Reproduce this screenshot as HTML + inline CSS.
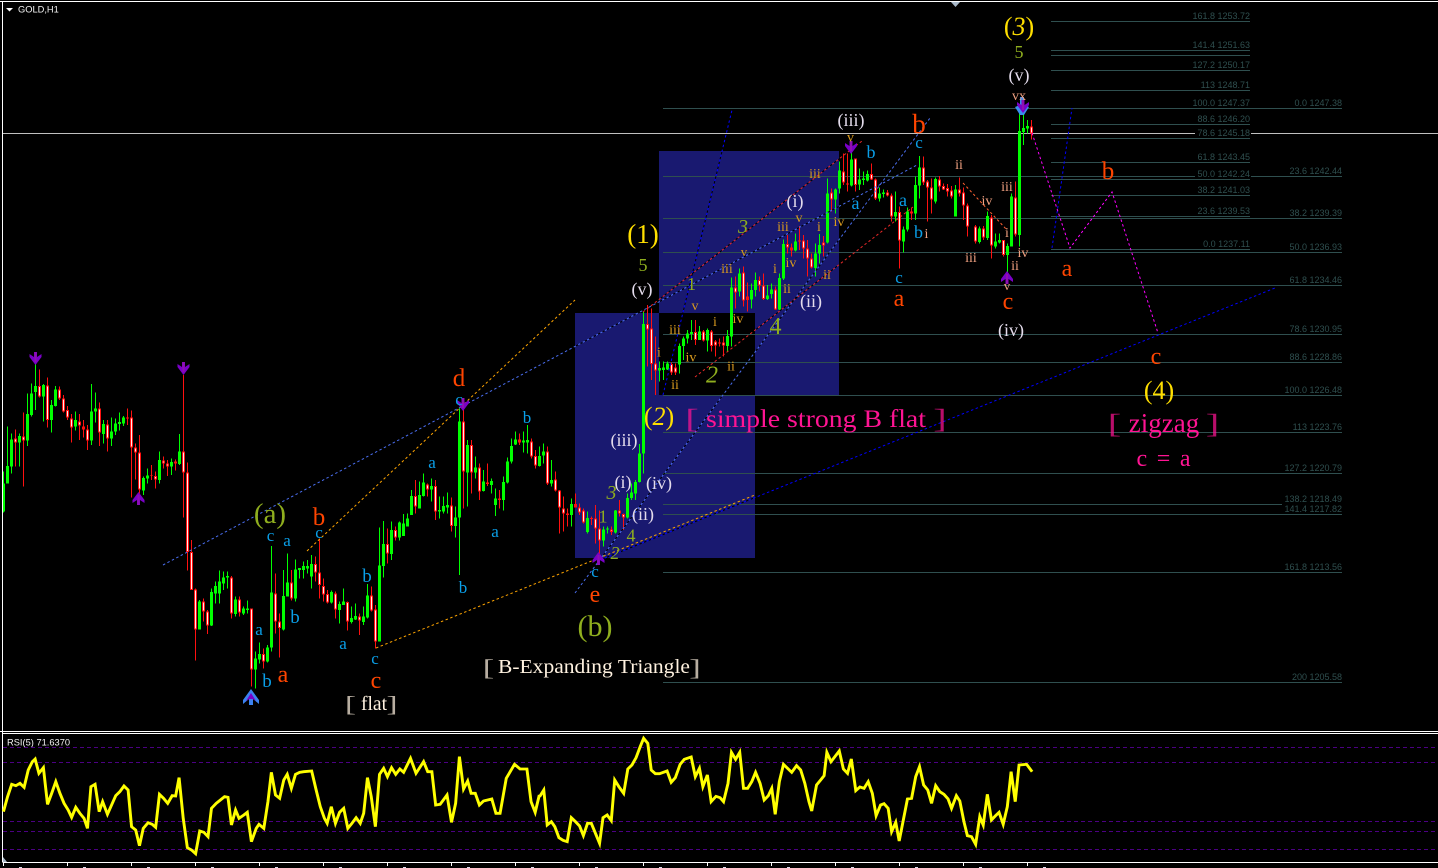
<!DOCTYPE html>
<html lang="en">
<head>
<meta charset="utf-8">
<title>GOLD,H1</title>
<style>
html,body{margin:0;padding:0;background:#000;width:1438px;height:868px;overflow:hidden}
svg{display:block}
text{font-family:"Liberation Serif","DejaVu Serif",serif;text-anchor:middle}
.f{font-family:"Liberation Sans","DejaVu Sans",sans-serif;font-size:9px;fill:#2f4f4f;text-anchor:end}
.u{font-family:"Liberation Sans","DejaVu Sans",sans-serif;font-size:9.3px;fill:#f4f4f4;text-anchor:start}
.bl{fill:#0a9fe8}.or{fill:#ff4500}.ol{fill:#8fae1e}.ye{fill:#ffdf00}.go{fill:#d99a1e}.sa{fill:#f0a080}
.wh{fill:#e4dcec}.pk{fill:#ff1493}.cr{fill:#fff2e0}
.s12{font-size:13px}.s14{font-size:14px}.s17{font-size:17px}.s18{font-size:18px}.s19{font-size:19px}.s24{font-size:24px}.s26{font-size:26px}
.it{font-style:italic}
.br{opacity:.72}
.cw{fill:none;shape-rendering:crispEdges}
.tl{fill:none;stroke-width:1;stroke-dasharray:2.5 2.5}
</style>
</head>
<body>
<svg width="1438" height="868" viewBox="0 0 1438 868" xmlns="http://www.w3.org/2000/svg">
<defs>
<clipPath id="rc"><path d="M575 313H659V395H755V558H575ZM659 151H839V395H755V313H659Z"/></clipPath>
<g id="ad"><path d="M-1.5-7H1.5V-2L6-5V-2L0 6L-6-2V-5L-1.5-2Z" fill="#7a00c8"/><path d="M-1-7H1V3H-1Z" fill="#9010b0"/></g>
<g id="au"><path d="M-1.5 7H1.5V2L6 5V2L0-6L-6 2V5L-1.5 2Z" fill="#7a00c8"/><path d="M-1 7H1V-3H-1Z" fill="#9010b0"/></g>
</defs>
<rect width="1438" height="868" fill="#000"/>

<!-- blue boxes -->
<path d="M575 313H659V395H755V558H575Z" fill="#191970"/>
<path d="M659 151H839V395H755V313H659Z" fill="#191970"/>

<!-- fibonacci lines -->
<path fill="none" stroke="#2f4f4f" shape-rendering="crispEdges" d="M1051 21.5H1250M1051 50.5H1250M1051 55.5H1250M1051 70.5H1250M1051 90.5H1250M1051 124.5H1250M1051 138.5H1250M1051 162.5H1250M1051 179.5H1250M1051 195.5H1250M1051 216.5H1250M1051 249.5H1250M663 108.5H1342M663 176.5H1342M663 218.5H1342M663 252.5H1342M663 285.5H1342M663 334.5H1342M663 362.5H1342M663 395.5H1342M663 432.5H1342M663 473.5H1342M663 504.5H1282M663 514.5H1342M663 572.5H1342M663 682.5H1342"/>
<path stroke="#c0c0c0" shape-rendering="crispEdges" d="M3 133.5H1438"/>

<!-- candles, first segment -->
<g transform="translate(.17 340) scale(.33333)" class="cw">
<path stroke="#00ff00" stroke-width="3" d="M10 395V518M22 260V402M34 280V400M58 280V380M82 160V318M94 130V230M106 60V210M130 132V244M154 180V278M166 138V200M226 215V272M274 132V315M286 158V248M310 240V310M334 232V318M346 235V285M358 218V272M370 228V258M430 410V465M442 385V430M478 334V430M514 355V405M538 282V375M598 780V868M634 745V858M646 725V790M658 692V790M670 695V750M682 695V745M706 770V830M730 800V825M742 782V820M766 935V1045M778 908V970M802 915V968M814 618V935M850 690V872M862 640V770M886 658V785M898 685V715M910 665V715M922 660V700M934 645V745M994 752V790M1018 785V850M1030 745V795M1054 800V850M1066 790V840M1090 800V855M1102 732V835M1138 563V905M1150 543V712M1174 545V660M1198 545V602"/>
<path stroke="#00ff00" stroke-width="9" d="M10 430V515M22 378V430M34 298V380M58 288V308M82 222V302M94 160V225M106 138V156M130 135V170M154 195V240M166 148V198M226 240V260M274 214V302M286 205V215M310 252V282M334 274V296M346 250V275M358 246V252M370 232V250M430 414V452M442 406V416M478 360V420M514 366V380M538 334V372M598 784V868M634 756V856M646 738V760M658 724V760M670 712V730M682 708V712M706 778V822M730 806V820M742 805V810M766 955V988M778 942V958M802 922V964M814 757V922M850 768V868M862 727V770M886 688V776M898 684V690M910 678V690M922 678V685M934 672V710M994 756V788M1018 792V810M1030 785V795M1054 834V846M1066 828V838M1090 830V846M1102 766V832M1138 676V904M1150 612V678M1174 570V642M1198 548V592"/>
<path stroke="#ff1010" stroke-width="3" d="M46 268V380M70 217V440M118 88V172M142 112V262M178 140V180M190 165V218M202 198V240M214 222V308M238 222V300M250 240V292M262 255V330M298 188V318M322 240V335M382 205V255M394 212V472M406 310V418M418 285V460M454 375V420M466 395V445M490 350V385M502 360V408M526 358V392M550 105V532M562 368V692M574 600V680M586 745V962M610 775V845M622 810V882M694 708V835M718 770V830M754 805V1040M790 925V985M826 700V880M838 820V952M874 690V782M946 650V725M958 595V775M970 715V785M982 750V790M1006 755V835M1042 785V872M1078 820V885M1114 740V815M1126 795V925M1162 565V670M1186 560V602"/>
<path stroke="#ff1010" stroke-width="9" d="M46 295V308M70 290V302M118 138V170M142 136V240M178 148V175M190 175V214M202 210V232M214 236V262M238 244V256M250 260V268M262 268V302M298 205V278M322 254V296M382 232V236M394 232V322M406 322V338M418 337V448M454 405V407M466 408V418M490 362V370M502 370V380M526 364V370M550 334V398M562 397V636M574 636V750M586 748V868M610 784V814M622 814V856M694 712V820M718 778V818M754 805V988M790 942V964M826 760V845M838 845V864M874 727V776M946 672V698M958 698V735M970 738V764M982 762V788M1006 760V808M1042 786V844M1078 830V842M1114 766V812M1126 808V904M1162 612V640M1186 570V592"/>
<path stroke="#ffecec" stroke-width="3" d="M46 298V305M70 293V299M118 141V167M142 139V237M178 151V172M190 178V211M202 213V229M214 239V259M238 247V253M262 271V299M298 208V275M322 257V293M394 235V319M406 325V335M418 340V445M466 411V415M490 365V367M502 373V377M550 337V395M562 400V633M574 639V747M586 751V865M610 787V811M622 817V853M694 715V817M718 781V815M754 808V985M790 945V961M826 763V842M838 848V861M874 730V773M946 675V695M958 701V732M970 741V761M982 765V785M1006 763V805M1042 789V841M1078 833V839M1114 769V809M1126 811V901M1162 615V637M1186 573V589"/>
</g>

<!-- candles, second segment -->
<g transform="translate(380.17 300) scale(.33333)" class="cw">
<path stroke="#00ff00" stroke-width="3" d="M70 642V708M82 640V680M94 570V645M118 545V625M130 520V590M154 535V605M178 590V655M190 590V640M202 578V640M226 620V712M238 325V825M262 420V620M286 470V535M310 510V575M334 535V580M346 565V648M370 530V632M382 472V550M394 415V490M406 395V435M430 395V458M442 375V460M478 440V500M490 430V490M514 480V560M574 595V680M622 635V700M670 680V740M682 680V700M706 630V700M742 580V655M754 550V600M766 540V600M778 432V548M790 35V520M838 185V245M850 185V240M862 185V210M898 130V220M910 110V180M922 90V130M934 60V120M958 78V120M982 85V155M1042 90V155"/>
<path stroke="#00ff00" stroke-width="9" d="M70 670V708M82 655V680M94 588V645M118 585V625M130 548V588M154 558V568M178 630V635M190 618V635M202 615V622M226 652V678M238 365V652M262 435V518M286 502V518M310 545V573M334 543V555M346 595V615M370 546V600M382 484V548M394 438V484M406 418V434M430 422V428M442 420V428M478 468V498M490 454V466M514 540V550M574 612V645M622 654V696M670 688V722M682 686V689M706 632V698M742 594V652M754 578V594M766 546V580M778 460V546M790 72V460M838 204V212M850 202V210M862 190V208M898 138V194M910 116V138M922 100V116M934 96V102M958 94V120M982 90V122M1042 108V138"/>
<path stroke="#ff1010" stroke-width="3" d="M106 540V640M142 550V590M166 540V660M214 592V695M250 310V625M274 420V580M298 490V600M322 490V558M358 570V625M418 400V435M454 415V475M466 450V505M502 440V555M526 515V575M538 570V700M550 590V695M562 625V680M586 580V622M598 610V645M610 625V670M634 650V675M646 615V730M658 632V770M694 680V705M718 600V650M730 640V690M802 15V200M814 25V240M826 110V285M874 188V225M886 190V225M946 60V135M970 90V125M994 90V155M1006 120V170M1018 115V140M1030 110V170"/>
<path stroke="#ff1010" stroke-width="9" d="M106 588V620M142 553V568M166 558V635M214 616V678M250 364V515M274 435V518M298 502V575M322 548V552M358 595V600M418 418V428M454 424V470M466 468V496M502 454V550M526 538V572M538 572V622M550 625V640M562 640V645M586 612V622M598 622V638M610 632V668M634 654V657M646 655V685M658 686V722M694 688V696M718 632V640M730 642V652M802 72V88M814 85V192M826 190V212M874 192V218M886 202V218M946 96V120M970 94V122M994 94V138M1006 125V137M1018 127V130M1030 128V137"/>
<path stroke="#ffecec" stroke-width="3" d="M106 591V617M142 556V565M166 561V632M214 619V675M250 367V512M274 438V515M298 505V572M454 427V467M466 471V493M502 457V547M526 541V569M538 575V619M550 628V637M598 625V635M610 635V665M646 658V682M658 689V719M694 691V693M718 635V637M730 645V649M802 75V85M814 88V189M826 193V209M874 195V215M886 205V215M946 99V117M970 97V119M994 97V135M1006 128V134M1030 131V134"/>
</g>

<!-- candles, third segment -->
<g transform="translate(640.17 100) scale(.33333)" class="cw">
<path stroke="#00ff00" stroke-width="3" d="M274 532V740M298 505V590M334 550V625M346 518V590M382 555V600M394 550V595M418 520V630M430 418V540M466 400V455M526 430V530M538 402V490M562 235V430M586 265V340M598 185V280M634 135V260M658 205V270M670 215V255M682 212V245M718 262V305M730 268V292M766 275V365M790 380V458M802 322V395M826 230V360M838 168V295M886 232V310M946 255V350M1018 380V430M1042 335V420M1066 400V445M1078 400V430M1102 430V520M1114 280V440M1138 30V440M1150 40V135M1162 60V100"/>
<path stroke="#00ff00" stroke-width="9" d="M274 562V710M298 520V575M334 570V598M346 540V570M382 586V597M394 568V582M418 534V628M430 432V536M466 424V452M526 460V504M538 435V460M562 280V428M586 268V298M598 212V266M634 178V256M658 238V254M670 236V240M682 222V242M718 280V296M730 278V282M766 336V350M790 388V424M802 334V388M826 255V340M838 202V256M886 237V304M946 268V350M1018 385V426M1042 348V414M1066 424V440M1078 420V428M1102 438V465M1114 290V440M1138 93V405M1150 84V96M1162 78V86"/>
<path stroke="#ff1010" stroke-width="3" d="M286 530V625M310 500V620M322 548V635M358 530V575M370 520V600M406 560V630M442 405V460M454 430V470M478 378V450M490 405V475M502 420V530M514 460V505M550 408V470M574 265V335M610 160V255M622 160V275M646 175V275M694 190V240M706 235V300M742 270V290M754 280V365M778 320V505M814 322V360M850 170V255M862 240V365M874 235V340M898 228V275M910 250V270M922 252V290M934 258V295M958 232V290M970 262V360M982 310V410M1006 375V430M1030 378V420M1054 345V475M1090 420V470M1126 245V410M1174 60V118"/>
<path stroke="#ff1010" stroke-width="9" d="M286 562V578M310 517V602M322 590V600M358 540V556M370 556V597M406 568V628M442 432V442M454 442V452M478 422V424M490 422V446M502 446V476M514 475V502M550 428V436M574 278V298M610 214V248M622 250V254M646 176V255M694 222V238M706 238V296M742 278V286M754 286V350M778 336V422M814 334V340M850 202V248M862 244V262M874 262V298M898 238V260M910 258V268M922 264V274M934 272V290M958 268V280M970 278V316M982 316V380M1006 380V424M1030 385V412M1054 352V436M1090 420V465M1126 292V404M1174 80V100"/>
<path stroke="#ffecec" stroke-width="3" d="M286 565V575M310 520V599M358 543V553M370 559V594M406 571V625M442 435V439M490 425V443M502 449V473M514 478V499M550 431V433M574 281V295M610 217V245M646 179V252M694 225V235M706 241V293M742 281V283M754 289V347M778 339V419M850 205V245M862 247V259M874 265V295M898 241V257M910 261V265M922 267V271M934 275V287M958 271V277M970 281V313M982 319V377M1006 383V421M1030 388V409M1054 355V433M1090 423V462M1126 295V401M1174 83V97"/>
</g>

<!-- trend lines -->
<g class="tl">
<path stroke="#4a6ef0" d="M163 565L917 165M575 593L930 118"/>
<path stroke="#ffa500" d="M307 551L575 300M376 648L755 495"/>
<path stroke="#0000ff" d="M600 560L1275 288M663 395L732 110M1052 248L1072 108"/>
<path stroke="#e82828" d="M643 312L862 141M695 377L913 207"/>
<path stroke="#ff6030" d="M963 183L1007 230"/>
<path stroke="#ff00ff" d="M1032 133L1070 248L1112 192L1158 333"/>
</g>
<g clip-path="url(#rc)"><g class="tl" stroke="#000" stroke-dashoffset="2.5">
<path d="M163 565L917 165M575 593L930 118M663 395L732 110M643 312L862 141M695 377L913 207M600 560L1275 288"/>
</g></g>

<!-- arrows -->
<use href="#ad" x="35.5" y="359"/>
<use href="#ad" x="183.5" y="369"/>
<use href="#au" x="138.5" y="498"/>
<g transform="translate(251 697)"><path d="M-2 8H2V2L8 7V3L0-8L-8 3V7L-2 2Z" fill="#3b82f0"/><path d="M-1.5 2H1.5L5 4L0-4L-5 4Z" fill="#7a00c8"/></g>
<use href="#ad" x="463" y="405"/>
<use href="#au" x="598.5" y="558"/>
<use href="#ad" x="851" y="148"/>
<use href="#au" x="1007" y="277"/>
<g transform="translate(1022 105)"><path d="M-2-8H2V0L7 2L2 10H-2L-7 2L-2 0Z" fill="#3a8cf0"/></g>
<use href="#ad" x="1023" y="107"/>

<!-- wave labels -->
<text x="270" y="523" class="ol" font-size="29">(a)</text>
<text x="319" y="525" class="or" font-size="25">b</text>
<text x="270.5" y="541" class="bl s17">c</text>
<text x="287" y="546" class="bl s17">a</text>
<text x="319" y="538" class="bl s17">c</text>
<text x="259" y="635" class="bl s17">a</text>
<text x="295" y="623" class="bl s19">b</text>
<text x="367" y="582" class="bl s19">b</text>
<text x="267" y="687" class="bl s19">b</text>
<text x="283" y="682" class="or s24">a</text>
<text x="343" y="649" class="bl s17">a</text>
<text x="375" y="664" class="bl s17">c</text>
<text x="376" y="688" class="or s24">c</text>
<text x="374" y="710" class="cr" font-size="19.5">flat</text>
<text transform="translate(350.5 711.5) scale(1.5 1)" class="cr br" font-size="22">[</text>
<text transform="translate(392 711.5) scale(1.5 1)" class="cr br" font-size="22">]</text>

<text x="459" y="386" class="or" font-size="25">d</text>
<text x="459" y="405" class="bl s17">c</text>
<text x="432" y="468" class="bl s17">a</text>
<text x="527" y="423" class="bl s17">b</text>
<text x="495" y="537" class="bl s17">a</text>
<text x="463" y="593" class="bl s17">b</text>
<text x="595" y="577" class="bl s17">c</text>
<text x="595" y="602" class="or s24">e</text>
<text x="595" y="636" class="ol" font-size="30">(b)</text>
<text x="594" y="673" class="cr" font-size="20.5" textLength="192" lengthAdjust="spacingAndGlyphs">B-Expanding Triangle</text>
<text transform="translate(488.5 675.5) scale(1.5 1)" class="cr br" font-size="23">[</text>
<text transform="translate(695 675.5) scale(1.5 1)" class="cr br" font-size="23">]</text>

<text x="643" y="243" class="ye" font-size="27">(1)</text>
<text x="643" y="271" class="ol s18">5</text>
<text x="642" y="295" class="wh s18">(v)</text>
<text x="659" y="425" class="ye s26">(<tspan class="it">2</tspan>)</text>
<text x="624" y="446" class="wh s18">(iii)</text>
<text x="623" y="488" class="wh s18">(i)</text>
<text x="659" y="489" class="wh s18">(iv)</text>
<text x="643" y="520" class="wh s18">(ii)</text>
<text x="611.5" y="499" class="ol it" font-size="20">3</text>
<text x="603" y="522.5" class="ol s18">1</text>
<text x="631" y="541.5" class="ol s18">4</text>
<text x="615" y="559" class="ol it s18">2</text>
<text x="659" y="356.5" class="go s14">i</text>
<text x="675" y="389" class="go s14">ii</text>
<text x="675" y="334" class="go s14">iii</text>
<text x="691" y="361.5" class="go s14">iv</text>
<text x="712" y="382.5" class="ol it s24">2</text>
<text x="731" y="370.5" class="go s14">ii</text>
<text x="715" y="326" class="go s14">i</text>
<text x="738" y="323" class="go s14">iv</text>
<text x="775.5" y="334" class="ol s24">4</text>
<text x="695" y="310" class="go s14">v</text>

<text x="816" y="427" class="pk" font-size="25" textLength="220" lengthAdjust="spacingAndGlyphs">simple strong B flat</text>
<text transform="translate(692 428) scale(1.5 1)" class="pk br" font-size="27">[</text>
<text transform="translate(940 428) scale(1.5 1)" class="pk br" font-size="27">]</text>

<text x="851" y="126" class="wh s18">(iii)</text>
<text x="850.5" y="141.5" class="go s14">v</text>
<text x="871" y="158" class="bl s18">b</text>
<text x="919" y="133" class="or" font-size="27">b</text>
<text x="919" y="148" class="bl s17">c</text>
<text x="959" y="169" class="sa s14">ii</text>
<text x="815" y="178" class="go s14">iii</text>
<text x="795" y="207" class="wh s18">(i)</text>
<text x="743" y="233" class="ol it" font-size="20">3</text>
<text x="855.5" y="209" class="bl s18">a</text>
<text x="783" y="231" class="go s14">iii</text>
<text x="799" y="222" class="go s14">v</text>
<text x="819" y="231" class="go s14">i</text>
<text x="839" y="226" class="go s14">iv</text>
<text x="903" y="206" class="bl s18">a</text>
<text x="918.5" y="238" class="bl s18">b</text>
<text x="926.5" y="238" class="sa s14">i</text>
<text x="987" y="205" class="sa s14">iv</text>
<text x="1007" y="191" class="sa s14">iii</text>
<text x="1007" y="237" class="sa s14">i</text>
<text x="971" y="262" class="sa s14">iii</text>
<text x="1023" y="257" class="sa s14">iv</text>
<text x="1015" y="270" class="sa s14">ii</text>
<text x="1007" y="290" class="sa s12">v</text>
<text x="1008" y="309" class="or s24">c</text>
<text x="1011" y="336" class="wh s18">(iv)</text>
<text x="899" y="283" class="bl s17">c</text>
<text x="899" y="306" class="or s24">a</text>
<text x="727" y="273" class="go s14">iii</text>
<text x="744" y="256" class="go s12">v</text>
<text x="691.5" y="290" class="ol s18">1</text>
<text x="775" y="273" class="go s14">i</text>
<text x="791" y="267" class="go s14">iv</text>
<text x="787" y="293" class="go s14">ii</text>
<text x="827" y="279" class="go s14">ii</text>
<text x="811" y="307" class="wh s18">(ii)</text>

<text x="1019" y="35" class="ye s26">(<tspan class="it">3</tspan>)</text>
<text x="1019" y="58" class="ol s18">5</text>
<text x="1019" y="81" class="wh s18">(v)</text>
<text x="1019" y="100" class="sa s14">vx</text>
<text x="1108" y="179" class="or" font-size="25">b</text>
<text x="1067" y="276" class="or s24">a</text>
<text x="1156" y="364" class="or s24">c</text>
<text x="1159" y="399" class="ye s26">(4)</text>
<text x="1164" y="432" class="pk" font-size="27">zigzag</text>
<text transform="translate(1114.5 433) scale(1.5 1)" class="pk br" font-size="27">[</text>
<text transform="translate(1212.5 433) scale(1.5 1)" class="pk br" font-size="27">]</text>
<text x="1163.5" y="466" class="pk s24" textLength="54">c = a</text>

<!-- fibonacci labels -->
<text class="f" x="1250" y="19">161.8 1253.72</text>
<text class="f" x="1250" y="48">141.4 1251.63</text>
<text class="f" x="1250" y="68">127.2 1250.17</text>
<text class="f" x="1250" y="88">113 1248.71</text>
<text class="f" x="1250" y="106">100.0 1247.37</text>
<text class="f" x="1250" y="122">88.6 1246.20</text>
<rect x="1195" y="128" width="56" height="9" fill="#000"/>
<text class="f" x="1250" y="136">78.6 1245.18</text>
<text class="f" x="1250" y="160">61.8 1243.45</text>
<rect x="1195" y="170" width="56" height="8" fill="#000"/>
<text class="f" x="1250" y="177">50.0 1242.24</text>
<text class="f" x="1250" y="193">38.2 1241.03</text>
<text class="f" x="1250" y="214">23.6 1239.53</text>
<text class="f" x="1250" y="247">0.0 1237.11</text>
<text class="f" x="1342" y="106">0.0 1247.38</text>
<text class="f" x="1342" y="174">23.6 1242.44</text>
<text class="f" x="1342" y="216">38.2 1239.39</text>
<text class="f" x="1342" y="250">50.0 1236.93</text>
<text class="f" x="1342" y="283">61.8 1234.46</text>
<text class="f" x="1342" y="332">78.6 1230.95</text>
<text class="f" x="1342" y="360">88.6 1228.86</text>
<text class="f" x="1342" y="393">100.0 1226.48</text>
<text class="f" x="1342" y="430">113 1223.76</text>
<text class="f" x="1342" y="471">127.2 1220.79</text>
<text class="f" x="1342" y="502">138.2 1218.49</text>
<text class="f" x="1342" y="512">141.4 1217.82</text>
<text class="f" x="1342" y="570">161.8 1213.56</text>
<text class="f" x="1342" y="680">200 1205.58</text>

<!-- frames -->
<path fill="none" stroke="#fff" shape-rendering="crispEdges" d="M0 1.5H1438M2.5 1V862M0 731.5H1438M2.5 733.5H1438M2.5 862.5H1438"/>
<path d="M6 8H13L9.5 11.5Z" fill="#fff"/>
<text class="u" x="18" y="12.5">GOLD,H1</text>
<path d="M951 2H960L955.5 7Z" fill="#a8b8c8"/>

<!-- RSI window -->
<text class="u" x="7" y="745.5">RSI(5) 71.6370</text>
<path fill="none" stroke="#4b0082" stroke-dasharray="4 3" shape-rendering="crispEdges" d="M3 747.5H1438M3 762.5H1438M3 821.5H1438M3 831.5H1438M3 849.5H1438"/>
<g transform="translate(0 725) scale(.34439 .33333)" fill="none" stroke="#ffff00" stroke-width="8.5">
<polyline points="10,260 22,215 34,178 46,182 58,175 70,187 82,135 94,110 102,102 113,145 126,128 138,238 150,205 162,170 174,205 186,235 198,255 208,277 220,247 232,265 244,280 254,310 264,185 276,178 288,260 298,230 312,268 324,240 336,212 348,200 360,183 372,195 382,305 394,315 405,362 416,310 430,293 442,298 452,307 463,208 475,220 487,235 500,212 510,213 520,158 532,280 544,368 556,375 568,386 580,318 592,322 604,335 614,250 628,235 640,225 652,215 662,217 672,300 684,255 694,280 708,270 718,262 730,350 744,310 752,298 766,310 778,230 788,142 800,210 812,220 824,165 834,148 846,190 858,148 870,142 882,140 905,138 918,195 930,245 942,280 950,295 962,245 974,295 986,262 998,250 1010,310 1022,295 1034,278 1046,295 1056,265 1067,158 1078,215 1090,305 1102,148 1114,130 1125,155 1137,128 1149,148 1161,132 1172,142 1192,100 1208,145 1230,110 1242,140 1254,140 1265,240 1278,238 1298,210 1311,292 1323,235 1334,95 1346,192 1358,168 1368,205 1380,205 1392,240 1404,228 1428,222 1440,265 1452,265 1470,160 1494,118 1510,132 1530,132 1542,230 1554,262 1566,210"/>
</g>
<g transform="translate(530 725) scale(.34439 .33333)" fill="none" stroke="#ffff00" stroke-width="8.5">
<polyline points="28,215 40,195 50,300 62,290 72,305 84,338 96,346 108,350 120,278 132,290 144,303 155,332 167,295 178,295 190,325 202,355 212,278 224,270 236,287 246,165 258,185 272,205 284,132 296,120 308,98 320,65 330,40 342,55 352,135 364,146 376,146 398,138 410,172 422,158 436,118 448,103 468,96 480,155 492,130 502,185 515,150 526,230 540,214 552,218 562,230 575,175 585,82 597,103 609,82 620,190 632,190 644,170 655,142 668,175 680,225 692,212 702,190 712,268 724,170 736,118 748,130 760,142 774,122 786,135 798,175 810,230 818,258 832,180 844,165 854,152 862,82 874,110 898,78 910,132 922,145 933,102 946,197 958,186 970,190 982,170 994,205 1005,272 1018,240 1028,236 1040,250 1050,320 1062,292 1072,348 1084,285 1096,222 1108,220 1120,155 1131,125 1143,180 1155,195 1166,235 1178,182 1190,200 1202,208 1214,222 1224,250 1238,212 1248,228 1260,290 1270,332 1282,335 1294,358 1306,275 1316,300 1328,208 1340,285 1352,272 1362,262 1374,298 1386,245 1397,140 1409,230 1420,120 1442,118 1458,140"/>
</g>
<path d="M3 857L7 862H3Z" fill="#a8b8c8"/>
<path stroke="#fff" shape-rendering="crispEdges" d="M3.5 863V866M67.5 863V866M131.5 863V866M195.5 863V866M259.5 863V866M323.5 863V866M387.5 863V866M451.5 863V866M515.5 863V866M579.5 863V866M643.5 863V866M707.5 863V866M771.5 863V866M835.5 863V866M899.5 863V866M963.5 863V866M1027.5 863V866"/>
<path stroke="#dde" shape-rendering="crispEdges" d="M19 867.5H22M83 867.5H86M147 867.5H150M211 867.5H214M275 867.5H278M339 867.5H342M403 867.5H406M467 867.5H470M531 867.5H534M595 867.5H598M659 867.5H662M723 867.5H726M787 867.5H790M851 867.5H854M915 867.5H918M979 867.5H982M1043 867.5H1046"/>
</svg>
</body>
</html>
